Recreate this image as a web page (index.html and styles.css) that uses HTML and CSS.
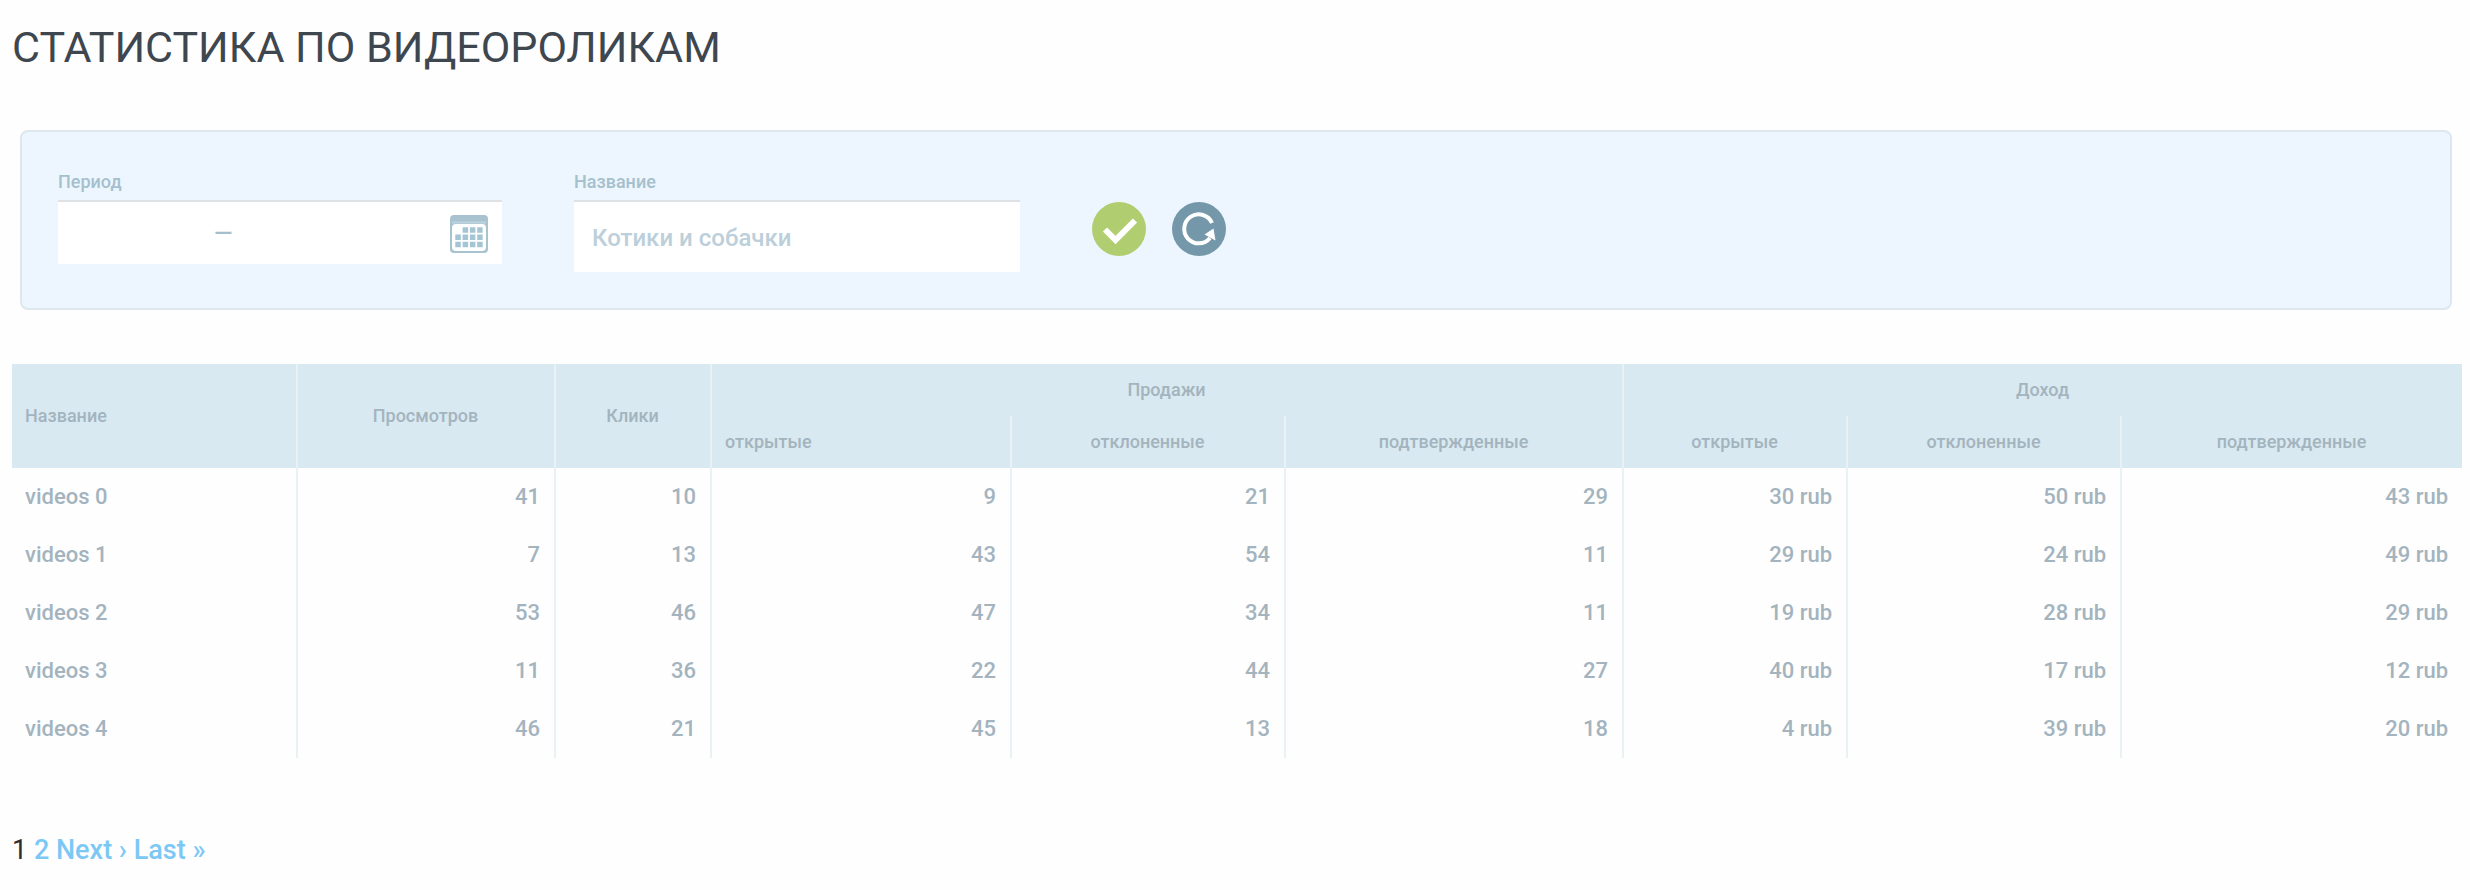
FILE: index.html
```html
<!DOCTYPE html>
<html lang="ru">
<head>
    <meta charset="UTF-8">
    <title>Статистика по видеороликам</title>
    <link rel="stylesheet" href="styles.css">
</head>
<body>
    <h1>СТАТИСТИКА ПО ВИДЕОРОЛИКАМ</h1>

    <form class="filter">
        <div class="field">
            <label for="date-from">Период</label>
            <div class="period">
                <input type="text" id="date-from" aria-label="Период с">
                <span>—</span>
                <input type="text" id="date-to" aria-label="Период по">
                <button type="button" class="calendar" aria-label="Календарь">
                    <svg width="38" height="38" viewBox="0 0 38 38">
                        <rect width="38" height="38" rx="4" fill="#a8c2d0"/>
                        <path d="M2 7.500h34" stroke="#bcd3de" stroke-width="2"/>
                        <rect x="2" y="9" width="34" height="27" rx="4" fill="#fff"/>
                        <path d="M12.600 15h20M5.300 22.300h28M5.300 29.600h28" stroke="#a5c5d5" stroke-width="5.500" stroke-dasharray="5.500 1.800"/>
                    </svg>
                </button>
            </div>
        </div>
        <div class="field field-name">
            <label for="name">Название</label>
            <input type="text" id="name" class="name" placeholder="Котики и собачки">
        </div>
        <div class="actions">
            <button type="submit" aria-label="Применить">
                <svg width="54" height="54" viewBox="0 0 54 54">
                    <circle cx="27" cy="27" r="27" fill="#b0cd70"/>
                    <path d="M13 27.500L23.500 38L43 18.500" fill="none" stroke="#fff" stroke-width="6"/>
                </svg>
            </button>
            <button type="reset" aria-label="Сбросить">
                <svg width="54" height="54" viewBox="0 0 54 54">
                    <circle cx="27" cy="27" r="27" fill="#7597aa"/>
                    <path d="M40 21A14.500 14.500 0 1 0 38 36" fill="none" stroke="#fff" stroke-width="4"/>
                    <path d="M41.500 26.500L32.500 32.500L43.500 38.500Z" fill="#fff"/>
                </svg>
            </button>
        </div>
    </form>

    <table>
        <colgroup>
            <col class="c-name">
            <col class="c-views">
            <col class="c-clicks">
            <col class="c-sales-open">
            <col class="c-declined">
            <col class="c-sales-ok">
            <col class="c-income-open">
            <col class="c-declined">
            <col class="c-income-ok">
        </colgroup>
        <thead>
            <tr>
                <th rowspan="2" class="left">Название</th>
                <th rowspan="2">Просмотров</th>
                <th rowspan="2">Клики</th>
                <th colspan="3">Продажи</th>
                <th colspan="3" class="last">Доход</th>
            </tr>
            <tr>
                <th class="left">открытые</th>
                <th>отклоненные</th>
                <th>подтвержденные</th>
                <th>открытые</th>
                <th>отклоненные</th>
                <th class="last">подтвержденные</th>
            </tr>
        </thead>
        <tbody>
            <tr><td class="left">videos 0</td><td>41</td><td>10</td><td>9</td><td>21</td><td>29</td><td>30 rub</td><td>50 rub</td><td class="last">43 rub</td></tr>
            <tr><td class="left">videos 1</td><td>7</td><td>13</td><td>43</td><td>54</td><td>11</td><td>29 rub</td><td>24 rub</td><td class="last">49 rub</td></tr>
            <tr><td class="left">videos 2</td><td>53</td><td>46</td><td>47</td><td>34</td><td>11</td><td>19 rub</td><td>28 rub</td><td class="last">29 rub</td></tr>
            <tr><td class="left">videos 3</td><td>11</td><td>36</td><td>22</td><td>44</td><td>27</td><td>40 rub</td><td>17 rub</td><td class="last">12 rub</td></tr>
            <tr><td class="left">videos 4</td><td>46</td><td>21</td><td>45</td><td>13</td><td>18</td><td>4 rub</td><td>39 rub</td><td class="last">20 rub</td></tr>
        </tbody>
    </table>

    <nav class="pagination">
        <span class="current">1</span>
        <a href="#">2</a>
        <a href="#">Next ›</a>
        <a href="#">Last »</a>
    </nav>
</body>
</html>
```
FILE: styles.css
```css
* {
    box-sizing: border-box;
}
body {
    margin: 0;
    padding: 20px 8px 20px 12px;
    background: #fefefe;
    color: #2d2d2d;
    font-family: Roboto, 'Liberation Sans', sans-serif;
    font-size: 22px;
}
h1 {
    margin: 0 0 56px;
    color: #3e474f;
    font-size: 43px;
    font-weight: 400;
    line-height: 54px;
}
input, button {
    margin: 0;
    padding: 0;
    border: 0;
    background: none;
    font-family: inherit;
}
button {
    display: flex;
    cursor: pointer;
}

/* filter */
.filter {
    display: flex;
    gap: 72px;
    margin: 0 10px 54px 8px;
    padding: 38px 36px 36px;
    border: 2px solid #dce7ef;
    border-radius: 8px;
    background: #edf6fe;
}
.field {
    width: 444px;
}
.field-name {
    width: 446px;
}
.field label {
    display: block;
    margin-bottom: 6px;
    color: #a5c0cd;
    font-size: 18px;
    font-weight: 500;
    line-height: 24px;
}
.period, .name {
    width: 100%;
    border-top: 2px solid #dfe2e4;
    background: #fff;
}
.period {
    display: flex;
    align-items: center;
    height: 64px;
    padding-right: 14px;
    color: #a5c0cd;
    font-size: 24px;
    font-weight: 500;
}
.period input {
    width: 156px;
    height: 62px;
    padding-left: 18px;
    color: #a5c0cd;
    font-size: 22px;
}
.calendar {
    margin-left: auto;
    padding-top: 2px;
}
.name {
    height: 72px;
    padding: 2px 18px 0;
    color: #a5c0cd;
    font-size: 24px;
    font-weight: 500;
}
.name::placeholder {
    color: #bccfda;
    opacity: 1;
}
.actions {
    display: flex;
    align-items: flex-start;
    gap: 26px;
    padding-top: 32px;
}

/* statistics */
table {
    width: 100%;
    border-spacing: 0;
    table-layout: fixed;
    color: #a3b4be;
}
.c-name { width: 286px; }
.c-views { width: 258px; }
.c-clicks { width: 156px; }
.c-sales-open { width: 300px; }
.c-declined { width: 274px; }
.c-sales-ok { width: 338px; }
.c-income-open { width: 224px; }
.c-income-ok { width: 340px; }
th, td {
    padding: 0 14px 2px 13px;
    border-right: 2px solid #e9f1f5;
    font-weight: 500;
    text-align: right;
}
th {
    height: 52px;
    background: #d9e9f1;
    font-size: 18px;
    text-align: center;
}
td {
    height: 58px;
    font-size: 22px;
}
.left {
    text-align: left;
}
.last {
    border-right: 0;
}

.pagination {
    margin-top: 76px;
    font-size: 27px;
    line-height: 32px;
}
.pagination a {
    color: #7cc8f5;
    font-weight: 500;
    text-decoration: none;
}
```
